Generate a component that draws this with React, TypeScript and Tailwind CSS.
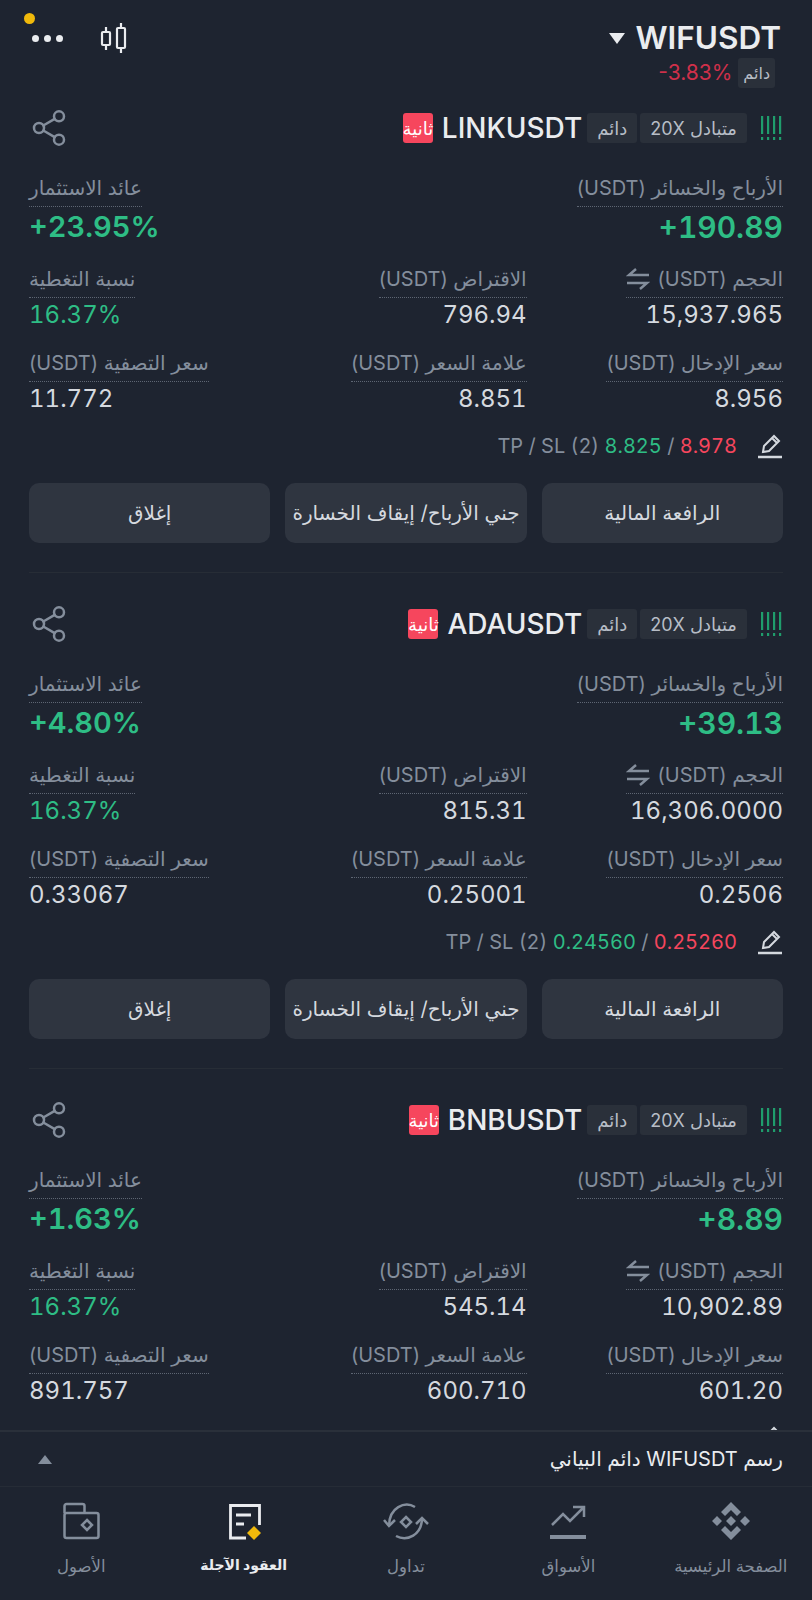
import { Share2 } from 'lucide-react';

type Pos = {
    symbol: string;
    pnl: string;
    roe: string;
    size: string;
    margin: string;
    entry: string;
    mark: string;
    liq: string;
    tp?: string;
    sl?: string;
};

const positions: Pos[] = [
    { symbol: 'LINKUSDT', pnl: '+190.89', roe: '+23.95%', size: '15,937.965', margin: '796.94', entry: '8.956', mark: '8.851', liq: '11.772', tp: '8.825', sl: '8.978' },
    { symbol: 'ADAUSDT', pnl: '+39.13', roe: '+4.80%', size: '16,306.0000', margin: '815.31', entry: '0.2506', mark: '0.25001', liq: '0.33067', tp: '0.24560', sl: '0.25260' },
    // cut off by the bottom bar, only the pencil tip shows
    { symbol: 'BNBUSDT', pnl: '+8.89', roe: '+1.63%', size: '10,902.89', margin: '545.14', entry: '601.20', mark: '600.710', liq: '891.757' },
];

function Tag({ children }: { children: React.ReactNode }) {
    return (
        <span className="h-[30px] px-[10px] flex items-center rounded-[3px] bg-[#2a303a] text-[#b7bdc6] text-[18px] whitespace-nowrap">
            {children}
        </span>
    );
}

function Field({ label, value, end, icon, valueClass }: { label: string; value: string; end?: boolean; icon?: boolean; valueClass?: string }) {
    return (
        <div className={`flex flex-col ${end ? 'items-end' : 'items-start'}`}>
            <div className="flex items-center gap-[8px] h-[32px] pb-[6px] border-b border-dotted border-[#5e6673] text-[#848e9c] text-[20px] whitespace-nowrap">
                <span>{label}</span>
                {icon && (
                    <svg width="24" height="22" viewBox="0 0 24 22" fill="none" stroke="#848e9c" strokeWidth="2.5">
                        <path d="M23 7H3l7-6M1 15h20l-7 6" />
                    </svg>
                )}
            </div>
            <div dir="ltr" className={`mt-[2px] leading-[30px] tabular-nums ${valueClass ?? 'text-[24px] text-[#d5d9df]'}`}>{value}</div>
        </div>
    );
}

function PencilIcon() {
    return (
        <svg className="ml-[20px]" width="26" height="26" viewBox="0 0 26 26" fill="none" stroke="#d5d9df" strokeWidth="2">
            <path d="M6 19l1-6L17 3l5 5-10 10-6 1zM15 5l5 5" />
            <path d="M1 24h24" strokeWidth="2.5" />
        </svg>
    );
}

function Card({ p }: { p: Pos }) {
    return (
        <div className="h-[496px] shrink-0 px-[29px] pt-[21px]">
            <div className="flex items-center justify-between h-[30px]">
                <div className="flex items-center">
                    <svg width="23" height="28" viewBox="0 0 23 28" fill="#1f9d6c">
                        <rect x="1" y="2" width="2.2" height="18" />
                        <rect x="1" y="23" width="2.2" height="3" />
                        <rect x="7" y="2" width="2.2" height="18" />
                        <rect x="7" y="23" width="2.2" height="3" />
                        <rect x="13" y="2" width="2.2" height="18" />
                        <rect x="13" y="23" width="2.2" height="3" />
                        <rect x="19" y="2" width="2.2" height="18" />
                        <rect x="19" y="23" width="2.2" height="3" />
                    </svg>
                    <div className="flex items-center gap-[3px] mr-[13px]">
                        <Tag>متبادل 20X</Tag>
                        <Tag>دائم</Tag>
                    </div>
                    <span dir="ltr" className="mr-[5px] text-[#eaecef] text-[28px] font-medium">{p.symbol}</span>
                    <span className="mr-[9px] w-[30px] h-[30px] flex items-center justify-center rounded-[3px] bg-[#f6465d] text-white text-[18px] whitespace-nowrap">ثانية</span>
                </div>
                <Share2 size={40} strokeWidth={1.5} className="shrink-0 text-[#848e9c]" />
            </div>

            <div className="flex justify-between mt-[32px]">
                <Field label="الأرباح والخسائر (USDT)" value={p.pnl} valueClass="text-[#2ebd85] text-[30px] font-semibold mt-[5px]" />
                <Field end label="عائد الاستثمار" value={p.roe} valueClass="text-[#2ebd85] text-[29px] font-semibold mt-[5px]" />
            </div>

            <div className="grid grid-cols-3 gap-x-[15px] mt-[24px]">
                <Field icon label="الحجم (USDT)" value={p.size} />
                <Field label="الاقتراض (USDT)" value={p.margin} />
                <Field end label="نسبة التغطية" value="16.37%" valueClass="text-[24px] text-[#2ebd85]" />
            </div>

            <div className="grid grid-cols-3 gap-x-[15px] mt-[20px]">
                <Field label="سعر الإدخال (USDT)" value={p.entry} />
                <Field label="علامة السعر (USDT)" value={p.mark} />
                <Field end label="سعر التصفية (USDT)" value={p.liq} />
            </div>

            <div dir="ltr" className="flex items-center justify-end h-[30px] mt-[17px] text-[20px] text-[#848e9c] tabular-nums">
                {p.tp && (
                    <>
                        <span>TP / SL (2)&nbsp;</span>
                        <span className="text-[#2ebd85]">{p.tp}</span>
                        <span>&nbsp;/&nbsp;</span>
                        <span className="text-[#f6465d]">{p.sl}</span>
                    </>
                )}
                <PencilIcon />
            </div>

            {p.tp && (
                <>
                    <div className="grid grid-cols-3 gap-x-[15px] mt-[22px]">
                        {['الرافعة المالية', 'جني الأرباح/ إيقاف الخسارة', 'إغلاق'].map(t => (
                            <button key={t} className="h-[60px] rounded-[10px] bg-[#2f3540] text-[#d5d9df] text-[20px] whitespace-nowrap">{t}</button>
                        ))}
                    </div>
                    <div className="mt-[29px] h-px bg-[#272d36]" />
                </>
            )}
        </div>
    );
}

const navItems = [
    {
        label: 'الصفحة الرئيسية',
        icon: (
            <svg width="38" height="38" viewBox="0 0 38 38" fill="#848e9c">
                <path d="M19 0l10 10-4 4-6-6-6 6-4-4zM19 38l10-10-4-4-6 6-6-6-4 4zM19 14l5 5-5 5-5-5zM5 14l5 5-5 5-5-5zM33 14l5 5-5 5-5-5z" />
            </svg>
        ),
    },
    {
        label: 'الأسواق',
        icon: (
            <svg width="36" height="40" viewBox="0 0 36 40" fill="none" stroke="#848e9c" strokeWidth="2.5">
                <path d="M2 24l11-11 7 7L34 6M23 6h11v10" />
                <path d="M0 36h36" strokeWidth="4" />
            </svg>
        ),
    },
    {
        label: 'تداول',
        icon: (
            <svg width="46" height="40" viewBox="0 0 46 40" fill="none" stroke="#848e9c" strokeWidth="2.5">
                <path d="M32 6C22 0 6 6 6 25M13 35c11 6 26-1 26-18" />
                <path d="M1 19l5 6 6-6M33 23l6-6 6 6" />
                <path d="M23 16l5 5-5 5-5-5z" />
            </svg>
        ),
    },
    {
        label: 'العقود الآجلة',
        active: true,
        icon: (
            <svg width="40" height="40" viewBox="0 0 40 40" fill="none">
                <path d="M22 37H6.5V4.5h29V24" stroke="#eaecef" strokeWidth="2.8" />
                <path d="M12 14h15M12 23h8" stroke="#eaecef" strokeWidth="2.8" />
                <path d="M30 25l7 7-7 7-7-7z" fill="#f0b90b" />
            </svg>
        ),
    },
    {
        label: 'الأصول',
        icon: (
            <svg width="40" height="40" viewBox="0 0 40 40" fill="none" stroke="#848e9c" strokeWidth="2.5">
                <path d="M3.5 12V5a2 2 0 0 1 2-2h16a2 2 0 0 1 2 2v7" />
                <rect x="3.5" y="12" width="34" height="25" rx="2" />
                <path d="M26 19l5 5-5 5-5-5z" />
            </svg>
        ),
    },
];

export default function App() {
    return (
        <div dir="rtl" className='w-[812px] h-[1600px] flex flex-col overflow-hidden bg-[#1e2430] font-["Inter","DejaVu_Sans",sans-serif]'>
            <div dir="ltr" className="relative h-[92px] shrink-0 pl-[32px] pr-[31px] flex justify-between">
                <span className="absolute left-[24px] top-[13px] w-[11px] h-[11px] rounded-full bg-[#f0b90b]" />
                <div className="flex items-center gap-[36px] h-[76px]">
                    <div className="flex gap-[5px]">
                        <span className="w-[7px] h-[7px] rounded-full bg-[#eaecef]" />
                        <span className="w-[7px] h-[7px] rounded-full bg-[#eaecef]" />
                        <span className="w-[7px] h-[7px] rounded-full bg-[#eaecef]" />
                    </div>
                    <svg width="30" height="32" viewBox="0 0 30 32" fill="none" stroke="#eaecef" strokeWidth="2.2">
                        <rect x="3" y="10" width="8" height="13" rx="1" />
                        <path d="M7 5v5M7 23v5" />
                        <rect x="18" y="6" width="8" height="20" rx="1" />
                        <path d="M22 1v5M22 26v5" />
                    </svg>
                </div>
                <div className="flex flex-col items-end">
                    <div className="flex items-center gap-[10px] h-[38px] mt-[19px] text-[#eaecef] text-[31.5px] font-semibold">
                        <svg width="16" height="11" viewBox="0 0 16 11" fill="#eaecef"><path d="M0 0h16L8 11z" /></svg>
                        WIFUSDT
                    </div>
                    <div className="flex items-center gap-[6px] mr-[6px]">
                        <span className="text-[#cf304a] text-[21px]">-3.83%</span>
                        <span className="h-[30px] px-[5px] flex items-center rounded-[3px] bg-[#2a303a] text-[#b7bdc6] text-[16px]">دائم</span>
                    </div>
                </div>
            </div>

            <div className="flex-1 min-h-0 overflow-hidden">
                {positions.map(p => <Card key={p.symbol} p={p} />)}
            </div>

            <div className="h-[57px] shrink-0 pr-[29px] pl-[38px] flex items-center justify-between border-t-2 border-b border-t-[#2a303a] border-b-[#262c36] bg-[#1e2430]">
                <span className="text-[#eaecef] text-[20px]">رسم WIFUSDT دائم البياني</span>
                <svg width="14" height="9" viewBox="0 0 14 9" fill="#848e9c"><path d="M7 0l7 9H0z" /></svg>
            </div>

            <div className="h-[113px] shrink-0 grid grid-cols-5">
                {navItems.map(n => (
                    <div key={n.label} className="flex flex-col items-center pt-[14px]">
                        <div className="h-[40px] flex items-center justify-center">{n.icon}</div>
                        <span className={`mt-[13px] whitespace-nowrap ${n.active ? 'text-[14px] text-[#eaecef] font-bold' : 'text-[16.5px] text-[#848e9c]'}`}>{n.label}</span>
                    </div>
                ))}
            </div>
        </div>
    );
}
